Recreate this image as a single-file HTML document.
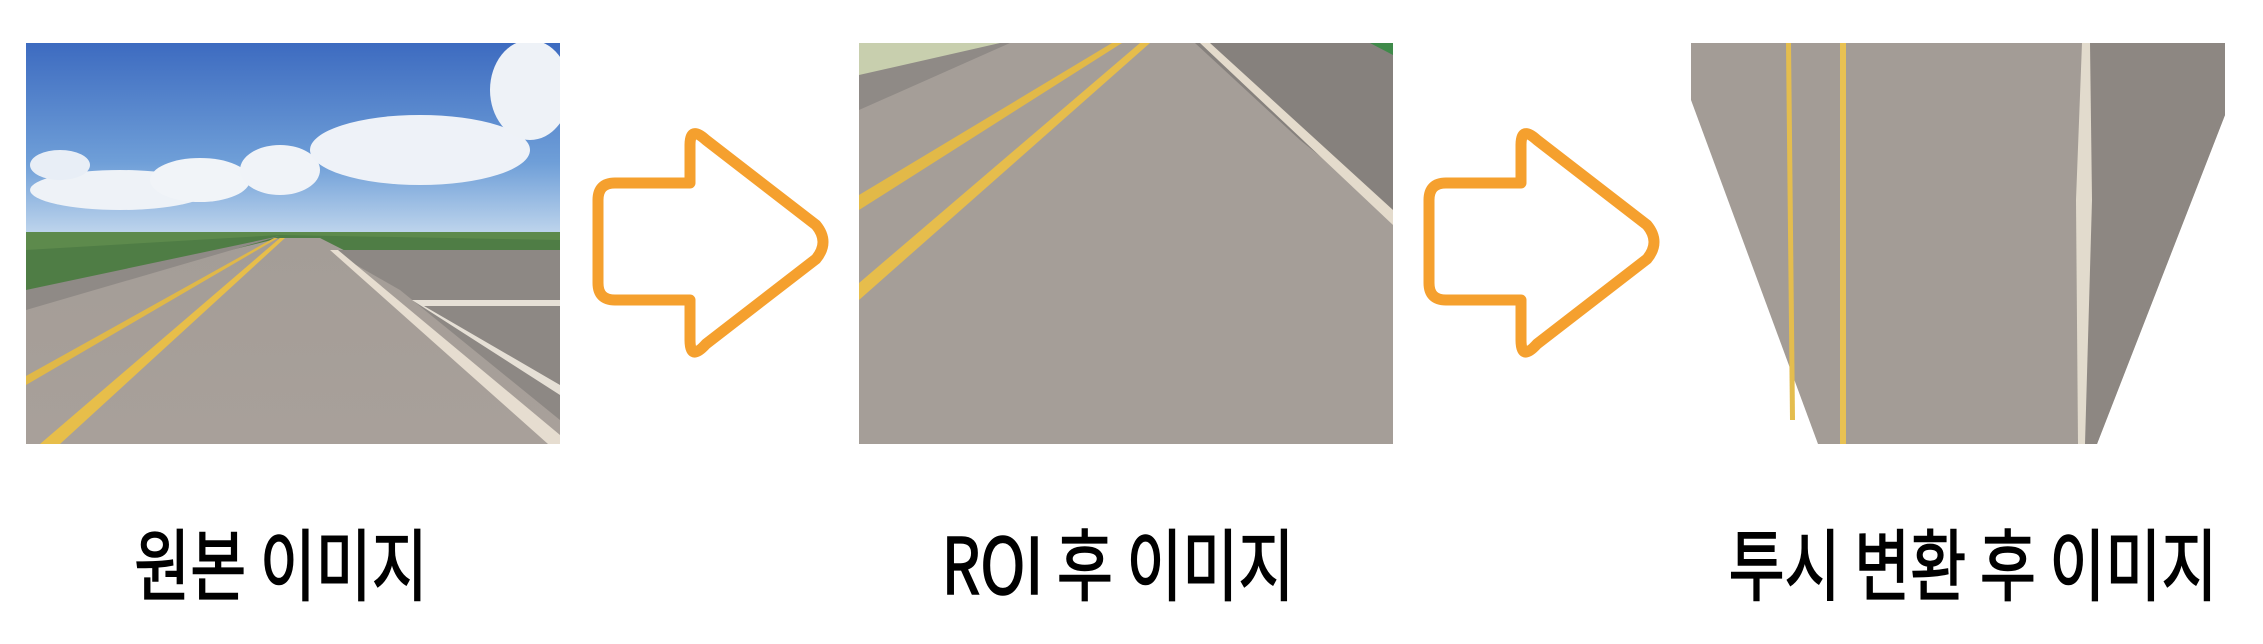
<!DOCTYPE html>
<html><head><meta charset="utf-8"><style>
html,body{margin:0;padding:0;background:#fff;width:2263px;height:644px;overflow:hidden}
.t{position:absolute;top:516px;font-family:"Noto Sans CJK KR","Liberation Sans",sans-serif;font-weight:normal;-webkit-text-stroke:1.6px #000;font-size:78px;color:#000;white-space:nowrap;transform:translateX(-50%) scaleX(0.78);line-height:90px}
</style></head><body>
<svg width="2263" height="644" style="position:absolute;left:0;top:0">
<defs>
<linearGradient id="sky" x1="0" y1="0" x2="0" y2="1"><stop offset="0" stop-color="#3d6bc0"/><stop offset="0.6" stop-color="#6f9fd8"/><stop offset="1" stop-color="#c9dcef"/></linearGradient>
<linearGradient id="road" x1="0" y1="0" x2="0" y2="1"><stop offset="0" stop-color="#a49d97"/><stop offset="1" stop-color="#a8a09a"/></linearGradient>
<clipPath id="c1"><rect x="26" y="43" width="534" height="401"/></clipPath>
<clipPath id="c2"><rect x="859" y="43" width="534" height="401"/></clipPath>
</defs>
<g clip-path="url(#c1)">
<rect x="26" y="43" width="534" height="200" fill="url(#sky)"/>
<ellipse cx="120" cy="190" rx="90" ry="20" fill="#eef2f7"/>
<ellipse cx="200" cy="180" rx="50" ry="22" fill="#f1f4f8"/>
<ellipse cx="280" cy="170" rx="40" ry="25" fill="#f0f3f8"/>
<ellipse cx="420" cy="150" rx="110" ry="35" fill="#eef2f8"/>
<ellipse cx="530" cy="90" rx="40" ry="50" fill="#eef2f7"/>
<ellipse cx="60" cy="165" rx="30" ry="15" fill="#e8eef6"/>
<rect x="26" y="232" width="534" height="50" fill="#5d8a4c"/>
<polygon points="26,250 280,235 560,240 560,282 26,290" fill="#4f7d45"/>
<polygon points="26,300 280,238 320,238 560,360 560,444 26,444" fill="url(#road)"/>
<polygon points="26,290 280,236 26,310" fill="#8f8a86"/>
<polygon points="330,250 560,250 560,420 400,290" fill="#8d8884"/>
<polygon points="280,238 285,238 60,444 40,444" fill="#e7be4a"/>
<polygon points="274,238 278,238 26,385 26,376" fill="#e0b848"/>
<polygon points="330,250 338,250 560,435 560,444 548,444" fill="#e6ddd0"/>
<polygon points="412,300 560,300 560,306 424,306 560,385 560,395" fill="#e6e0d6"/>
</g>
<path d="M598,200 Q598,183 615,183 L690,183 L690,145 Q690,125 706,140 L816,225 Q830,242 816,259 L706,344 Q690,362 690,340 L690,300 L615,300 Q598,300 598,283 Z" fill="#fff" stroke="#f5a02e" stroke-width="11" stroke-linejoin="round"/>
<g clip-path="url(#c2)">
<rect x="859" y="43" width="534" height="401" fill="#a59e98"/>
<polygon points="859,43 1010,43 859,110" fill="#8f8a86"/>
<polygon points="859,43 1000,43 859,75" fill="#c8cfae"/>
<polygon points="1195,43 1393,43 1393,215 1300,140" fill="#86817d"/>
<polygon points="1370,43 1393,43 1393,55" fill="#3f8a4a"/>
<polygon points="1112,43 1122,43 859,210 859,195" fill="#e2b948"/>
<polygon points="1140,43 1150,43 859,300 859,283" fill="#e6bd4c"/>
<polygon points="1200,43 1210,43 1393,210 1393,225" fill="#e4dbcc"/>
</g>
<g transform="translate(831,0)">
<path d="M598,200 Q598,183 615,183 L690,183 L690,145 Q690,125 706,140 L816,225 Q830,242 816,259 L706,344 Q690,362 690,340 L690,300 L615,300 Q598,300 598,283 Z" fill="#fff" stroke="#f5a02e" stroke-width="11" stroke-linejoin="round"/>
</g>
<polygon points="1691,43 2225,43 2225,115 2097,444 1818,444 1691,100" fill="#a39c96"/>
<polygon points="2090,43 2225,43 2225,115 2097,444 2080,444" fill="#8d8782"/>
<polygon points="1786,43 1791,43 1795,420 1790,420" fill="#e4bd4e"/>
<rect x="1840" y="43" width="6" height="401" fill="#e8c152"/>
<polygon points="2082,43 2090,43 2092,200 2085,444 2078,444 2076,200" fill="#e2dbcd"/>
</svg>
<div class="t" style="left:281px">원본 이미지</div>
<div class="t" style="left:1118px">ROI 후 이미지</div>
<div class="t" style="left:1973px">투시 변환 후 이미지</div>
</body></html>
